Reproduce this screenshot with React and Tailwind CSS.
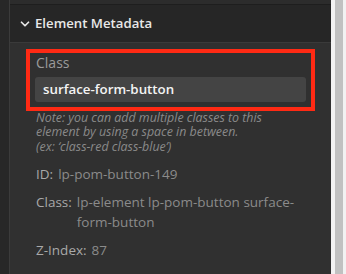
import { ChevronDown } from "lucide-react";

function InfoRow({ label, children }) {
  return (
    <div className="flex gap-[5px] leading-[20px]">
      <span className="text-[#a9a9a9] shrink-0">{label}</span>
      <span className="text-[#8b8b8b]">{children}</span>
    </div>
  );
}

export default function App() {
  return (
    <div
      className="w-[346px] h-[274px] flex overflow-hidden bg-[#f4f4f4]"
      style={{ fontFamily: "'Open Sans', Lato, sans-serif" }}
    >
      <div className="w-[10px] bg-[#272727] border-r border-[#3b3b3b]" />
      <div className="w-[321px] flex flex-col">
        <div className="h-[5px] bg-[#2c2c2c] border-b border-[#1e1e1e]" />
        <div className="h-[38px] bg-[#262626] border-b border-[#3a3a3a] flex items-center pl-[8px] gap-[3px]">
          <ChevronDown size={14} strokeWidth={3} className="text-[#e6e6e6]" />
          <span className="text-[13.2px] font-semibold text-[#e8e8e8]">Element Metadata</span>
        </div>
        <div className="flex-1 bg-[#303030] pt-[6px] pl-[16px] pr-[16px]">
          <div className="border-[4px] border-[#ff2a14] px-[5px] pb-[5px]">
            <div className="text-[14px] text-[#9b9b9b] leading-[20px] pl-[1px] mb-[4px]">Class</div>
            <div className="h-[25px] bg-[#444444] rounded-[3px] flex items-center px-[8px] text-[13.3px] font-semibold text-[#f4f4f4]">
              surface-form-button
            </div>
          </div>
          <p className="italic text-[12.4px] leading-[14.4px] text-[#8a8a8a] pl-[10px] w-[264px]">
            Note: you can add multiple classes to this element by using a space in between.
            <br />
            (ex: ‘class-red class-blue’)
          </p>
          <div className="pl-[10px] pt-[10px] flex flex-col gap-[8px] text-[13.5px] w-[300px]">
            <InfoRow label="ID:">lp-pom-button-149</InfoRow>
            <InfoRow label="Class:">lp-element lp-pom-button surface-form-button</InfoRow>
            <InfoRow label="Z-Index:">87</InfoRow>
          </div>
        </div>
      </div>
      <div className="w-[15px] flex">
        <div className="w-[4px] bg-[#f2f2f2]" />
        <div className="w-[8px] bg-[#c1c1c1]" />
        <div className="w-[3px] bg-[#f2f2f2]" />
      </div>
    </div>
  );
}
